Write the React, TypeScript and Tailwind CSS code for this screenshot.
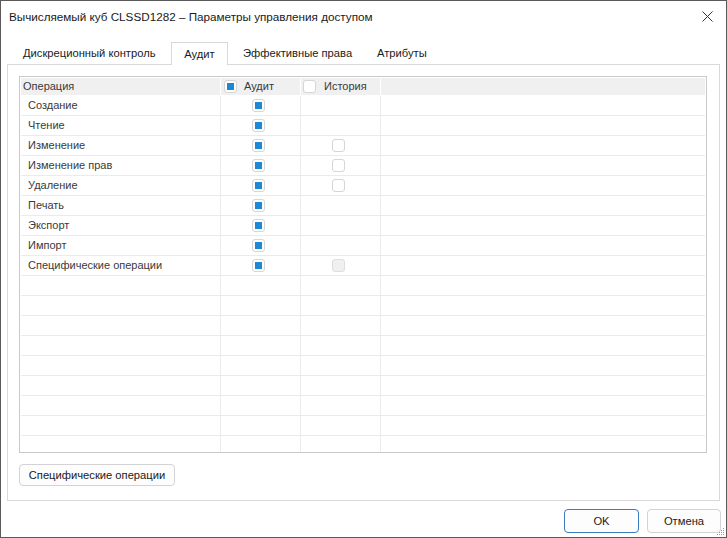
import React from "react";

const font = { fontFamily: '"Liberation Sans", Arial, sans-serif' };

function Check({ state }: { state: "on" | "off" | "disabled" }) {
  if (state === "on")
    return (
      <div className="w-[13px] h-[13px] rounded-[3px] border border-[#d6d6d6] bg-white flex items-center justify-center">
        <div className="w-[7px] h-[7px] bg-[#1e88d2]" />
      </div>
    );
  if (state === "disabled")
    return <div className="w-[13px] h-[13px] rounded-[3px] border border-[#dedede] bg-[#f0f0f0]" />;
  return <div className="w-[13px] h-[13px] rounded-[3px] border border-[#d6d6d6] bg-white" />;
}

type Row = { name: string; audit: boolean; hist: "none" | "off" | "disabled" };

const rows: Row[] = [
  { name: "Создание", audit: true, hist: "none" },
  { name: "Чтение", audit: true, hist: "none" },
  { name: "Изменение", audit: true, hist: "off" },
  { name: "Изменение прав", audit: true, hist: "off" },
  { name: "Удаление", audit: true, hist: "off" },
  { name: "Печать", audit: true, hist: "none" },
  { name: "Экспорт", audit: true, hist: "none" },
  { name: "Импорт", audit: true, hist: "none" },
  { name: "Специфические операции", audit: true, hist: "disabled" },
];

export default function App() {
  const empty = Array.from({ length: 9 });
  return (
    <div
      className="w-[727px] h-[538px] border border-[#5a5a5a] bg-white flex flex-col text-[11.2px] text-[#1b1b1b] overflow-hidden whitespace-nowrap"
      style={font}
    >
      {/* Title bar */}
      <div className="h-[31px] flex items-center justify-between pl-[8px] pr-[12px] shrink-0">
        <span className="text-[11.7px] text-[#1a1a1a]">
          Вычисляемый куб CLSSD1282 – Параметры управления доступом
        </span>
        <svg width="11" height="11" viewBox="0 0 11 11" className="mr-[1px]">
          <path d="M0.5 0.5 L10.5 10.5 M10.5 0.5 L0.5 10.5" stroke="#333" strokeWidth="1" fill="none" />
        </svg>
      </div>

      {/* Tabs */}
      <div className="mt-[10px] h-[22px] flex items-stretch pl-[10px] shrink-0 relative z-10">
        <div className="w-[160px] pl-[12px] flex items-center text-[#1a1a1a]">Дискреционный контроль</div>
        <div className="w-[57px] h-[23px] border border-b-0 border-[#d9d9d9] bg-white flex items-center justify-center text-[#1a1a1a]">
          Аудит
        </div>
        <div className="w-[134px] pl-[15px] flex items-center text-[#1a1a1a]">Эффективные права</div>
        <div className="pl-[15px] flex items-center text-[#1a1a1a]">Атрибуты</div>
      </div>

      {/* Panel */}
      <div className="mx-[6px] h-[437px] border border-[#d9d9d9] pt-[11px] pl-[11px] pr-[12px] flex flex-col shrink-0">
        {/* Grid */}
        <div className="h-[377px] border border-[#cacaca] p-px overflow-hidden flex flex-col text-[11px]">
          {/* Header */}
          <div className="h-[17px] mb-px flex shrink-0 text-[#3a3a3a]">
            <div className="w-[200px] bg-[#f0f0f0] border-r border-white pl-[2px] flex items-center">Операция</div>
            <div className="w-[80px] bg-[#f0f0f0] border-r border-white pl-[3px] flex items-center gap-[7px]">
              <Check state="on" />
              <span>Аудит</span>
            </div>
            <div className="w-[80px] bg-[#f0f0f0] border-r border-white pl-[2px] flex items-center gap-[8px]">
              <Check state="off" />
              <span>История</span>
            </div>
            <div className="flex-1 bg-[#f0f0f0]" />
          </div>
          {/* Rows */}
          {rows.map((r) => (
            <div key={r.name} className="h-[20px] flex shrink-0 border-b border-[#ebebeb] text-[#3a3a3a]">
              <div className="w-[200px] border-r border-[#ebebeb] pl-[7px] flex items-center">{r.name}</div>
              <div className="w-[80px] border-r border-[#ebebeb] pl-[31px] flex items-center">
                {r.audit && <Check state="on" />}
              </div>
              <div className="w-[80px] border-r border-[#ebebeb] pl-[31px] flex items-center">
                {r.hist === "off" && <Check state="off" />}
                {r.hist === "disabled" && <Check state="disabled" />}
              </div>
              <div className="flex-1" />
            </div>
          ))}
          {empty.map((_, i) => (
            <div key={i} className="h-[20px] flex shrink-0 border-b border-[#ebebeb]">
              <div className="w-[200px] border-r border-[#ebebeb]" />
              <div className="w-[80px] border-r border-[#ebebeb]" />
              <div className="w-[80px] border-r border-[#ebebeb]" />
              <div className="flex-1" />
            </div>
          ))}
        </div>

        <div className="mt-[11px]">
          <button className="w-[156px] h-[22px] rounded-[4px] border border-[#d3d3d3] bg-[#fdfdfd] text-[#1a1a1a] flex items-center justify-center">
            Специфические операции
          </button>
        </div>
      </div>

      {/* Footer */}
      <div className="mt-[8px] flex justify-end gap-[8px] pr-[5px] relative">
        <button className="w-[75px] h-[24px] rounded-[4px] border border-[#3a7cc0] bg-[#fdfdfd] text-[#1a1a1a] flex items-center justify-center">
          OK
        </button>
        <button className="w-[74px] h-[24px] rounded-[4px] border border-[#d3d3d3] bg-[#fdfdfd] text-[#1a1a1a] flex items-center justify-center">
          Отмена
        </button>
      </div>
      <div className="flex-1 relative">
        <svg width="10" height="10" viewBox="0 0 10 10" className="absolute right-[1px] bottom-[1px]">
          {[
            [8, 2],
            [6, 4],
            [8, 4],
            [4, 6],
            [6, 6],
            [8, 6],
            [2, 8],
            [4, 8],
            [6, 8],
            [8, 8],
          ].map(([x, y], i) => (
            <rect key={i} x={x} y={y} width="1" height="1" fill="#9a9a9a" />
          ))}
        </svg>
      </div>
    </div>
  );
}
